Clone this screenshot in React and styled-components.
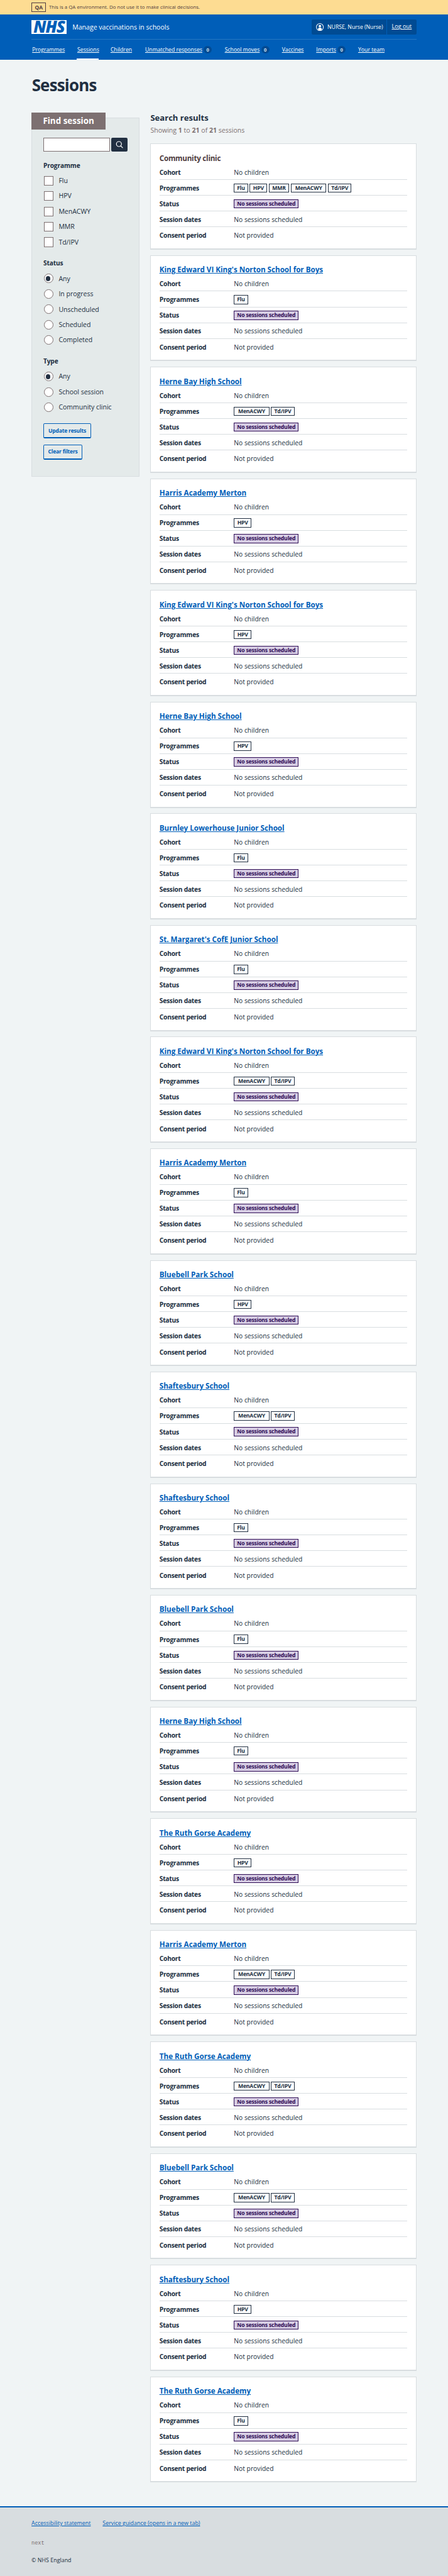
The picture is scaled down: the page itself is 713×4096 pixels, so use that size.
import React from "react";
import styled, { createGlobalStyle } from "styled-components";

const SCALE = 0.55675;
const px = (n) => `${+(n * SCALE).toFixed(3)}px`;

const color = {
  blue: "#005eb8",
  blueDark: "#004b93",
  ink: "#212f41",
  brown: "#4f3d40",
  taupe: "#7d7071",
  line: "#d8dde0",
  page: "#f0f4f5",
};

const GlobalStyle = createGlobalStyle`
  *, *::before, *::after { box-sizing: border-box; }
  body {
    margin: 0;
    background: ${color.page};
    color: ${color.ink};
    font-family: "Open Sans", "Noto Sans", sans-serif;
    font-size: ${px(18.5)};
    line-height: 1.2;
    white-space: nowrap;
  }
  h1, h2, h3, p, dl, dt, dd { margin: 0; padding: 0; font-weight: 700; }
`;

const Container = styled.div`
  margin: 0 ${px(90)};
  width: ${px(1100)};
`;

const Banner = styled.div`
  height: ${px(42)};
  background: #fddc92;
  color: ${color.brown};
`;
const BannerInner = styled(Container)`
  display: flex;
  align-items: center;
  height: 100%;
  gap: ${px(8)};
  font-size: ${px(14.22)};
`;
const EnvTag = styled.strong`
  display: flex;
  align-items: center;
  justify-content: center;
  width: ${px(42)};
  height: ${px(26)};
  border: 1px solid ${color.brown};
  font-size: ${px(15.2)};
  font-weight: 700;
`;

const Header = styled.header`
  height: ${px(128)};
  background: ${color.blue};
  color: #fff;
`;
const HeaderTop = styled(Container)`
  display: flex;
  align-items: center;
  height: ${px(72)};
  border-bottom: 1px solid #2577c3;
`;
const Logo = styled.div`
  display: flex;
  align-items: center;
  justify-content: center;
  width: ${px(100)};
  height: ${px(40)};
  background: #fff;
  color: ${color.blue};
  font-size: ${px(46)};
  font-weight: 800;
  font-style: italic;
  letter-spacing: -0.04em;
  line-height: 0.85;
`;
const ServiceName = styled.span`
  margin-left: ${px(17)};
  font-size: ${px(19)};
`;
const Account = styled.div`
  display: flex;
  align-items: stretch;
  width: ${px(300)};
  height: ${px(42)};
  margin-left: auto;
  border-radius: ${px(4)};
  background: ${color.blueDark};
  font-size: ${px(15.6)};
`;
const AccountUser = styled.div`
  display: flex;
  align-items: center;
  width: ${px(217)};
  padding-left: ${px(14)};
  gap: ${px(10)};
  border-right: 1px solid ${color.blue};
`;
const LogOut = styled.a`
  display: flex;
  flex: 1;
  align-items: center;
  justify-content: center;
  font-size: ${px(16.4)};
  text-decoration: underline;
`;

const Nav = styled(Container)`
  display: flex;
  height: ${px(56)};
  font-size: ${px(15.6)};
`;
const NavItem = styled.a`
  display: flex;
  align-items: center;
  width: ${(p) => px(p.$width)};
  margin-right: ${px(32)};
  padding: ${px(4)} ${px(2)} 0;
  gap: ${px(4)};
  border-bottom: ${px(4)} solid ${(p) => (p.$current ? "#fff" : "transparent")};
`;
const NavText = styled.span`
  text-decoration: underline;
`;
const Count = styled.span`
  display: flex;
  flex: none;
  align-items: center;
  justify-content: center;
  width: ${px(23.5)};
  height: ${px(22)};
  border-radius: 50%;
  background: ${color.blueDark};
  font-size: ${px(13.5)};
  font-weight: 600;
`;

const Main = styled(Container)`
  height: ${px(6987)};
`;
const PageTitle = styled.h1`
  height: ${px(151)};
  padding: ${px(46)} 0 0 ${px(1)};
  font-size: ${px(46.5)};
  letter-spacing: -0.03em;
`;
const Columns = styled.div`
  display: flex;
  align-items: flex-start;
  gap: ${px(32)};
`;

const Filters = styled.aside`
  width: ${px(308)};
  height: ${px(1026)};
  margin-top: ${px(15)};
  padding: 0 ${px(32)};
  border: 1px solid ${color.line};
  background: #e4eaea;
`;
const FiltersTitle = styled.h2`
  display: flex;
  align-items: center;
  justify-content: center;
  width: ${px(212)};
  height: ${px(48)};
  margin: -${px(16)} 0 0 calc(-${px(32)} - 1px);
  padding-bottom: ${px(2)};
  background: ${color.taupe};
  color: #fff;
  font-size: ${px(24.1)};
`;
const SearchBar = styled.div`
  display: flex;
  gap: ${px(4)};
  margin-top: ${px(24)};
`;
const SearchInput = styled.input`
  width: ${px(190)};
  height: ${px(40)};
  padding: 0;
  border: 1px solid ${color.taupe};
  border-radius: 0;
  background: #fff;
`;
const SearchButton = styled.button`
  display: flex;
  align-items: center;
  justify-content: center;
  width: ${px(48)};
  height: ${px(40)};
  padding: 0 0 ${px(2)};
  border: 0;
  border-radius: ${px(4)};
  background: ${color.ink};
`;
const Group = styled.div`
  padding-top: ${px(19)};
`;
const GroupTitle = styled.h3`
  display: flex;
  align-items: center;
  height: ${px(38)};
  margin-bottom: ${px(3)};
  font-size: ${px(18.2)};
  letter-spacing: -0.01em;
`;
const Option = styled.div`
  display: flex;
  align-items: center;
  height: ${px(44)};
  padding-left: ${px(2)};
  gap: ${px(15)};
  font-size: ${px(18.9)};
`;
const Box = styled.span`
  display: flex;
  align-items: center;
  justify-content: center;
  width: ${px(27)};
  height: ${px(27)};
  border: 1px solid ${color.taupe};
  border-radius: ${(p) => (p.$round ? "50%" : "0")};
  background: #fff;
`;
const Dot = styled.span`
  width: ${px(14)};
  height: ${px(14)};
  margin-right: ${px(4)};
  border-radius: 50%;
  background: ${color.ink};
`;
const Button = styled.button`
  display: flex;
  align-items: center;
  justify-content: center;
  width: ${(p) => px(p.$width)};
  height: ${px(43.5)};
  margin-top: ${(p) => px(p.$top)};
  padding: 0;
  border: 1px solid ${color.blue};
  border-bottom-width: 2px;
  border-radius: ${px(4)};
  background: transparent;
  color: ${color.blue};
  font: 700 ${px(15.4)} "Open Sans", sans-serif;
  letter-spacing: -0.025em;
`;

const Results = styled.section`
  width: ${px(760)};
`;
const ResultsTitle = styled.h2`
  height: ${px(38)};
  padding-top: ${px(2)};
  font-size: ${px(23.5)};
`;
const ResultsCount = styled.p`
  height: ${px(51)};
  padding-top: ${px(3)};
  color: ${color.taupe};
  font-size: ${px(19)};
  font-weight: 400;
  & b { font-weight: 700; }
`;
const Card = styled.article`
  height: ${px(302.9)};
  margin-bottom: ${px(16)};
  padding: ${px(23.5)} ${px(24)} 0;
  border: 1px solid ${color.line};
  border-bottom-width: 2px;
  background: #fff;
`;
const CardTitle = styled.h3`
  display: flex;
  align-items: center;
  height: ${px(33.4)};
  color: ${(p) => (p.$link ? color.blue : color.brown)};
  font-size: ${px(21)};
  letter-spacing: ${(p) => (p.$link ? "-0.002em" : "-0.023em")};
  text-decoration: ${(p) => (p.$link ? "underline" : "none")};
  text-decoration-thickness: 1px;
`;
const Row = styled.div`
  display: flex;
  align-items: center;
  height: ${px(45)};
  padding-top: ${px(3)};
  border-bottom: ${(p) => (p.$last ? "0" : `1px solid ${color.line}`)};
`;
const Key = styled.dt`
  width: ${px(213)};
  letter-spacing: -0.025em;
`;
const Value = styled.dd`
  display: flex;
  gap: ${px(5)};
  font-weight: 400;
`;
const Tag = styled.strong`
  display: flex;
  align-items: center;
  justify-content: center;
  width: ${(p) => px(p.$width)};
  height: ${px(26)};
  border: 1px solid ${(p) => (p.$purple ? "#2d0a54" : color.ink)};
  background: ${(p) => (p.$purple ? "#d6cce3" : "#fff")};
  color: ${(p) => (p.$purple ? "#2d0a54" : color.ink)};
  font-size: ${px(15.6)};
  font-weight: 700;
  letter-spacing: -0.022em;
`;

const Footer = styled.footer`
  height: ${px(200)};
  border-top: ${px(4)} solid ${color.blue};
  background: ${color.line};
  font-size: ${px(16)};
`;
const FooterLinks = styled(Container)`
  display: flex;
  align-items: center;
  gap: ${px(34)};
  height: ${px(94)};
  color: ${color.blue};
  text-decoration: underline;
`;
const Release = styled(Container)`
  height: ${px(49)};
  color: ${color.taupe};
  font-family: "Liberation Mono", monospace;
  font-size: ${px(15.4)};
`;
const Copyright = styled(Container)``;

const TAG_WIDTH = { Flu: 40, HPV: 50, MMR: 58, MenACWY: 101, "Td/IPV": 67 };

const NAV = [
  { label: "Programmes", width: 97 },
  { label: "Sessions", width: 63, current: true },
  { label: "Children", width: 67 },
  { label: "Unmatched responses", width: 195.5, count: 0 },
  { label: "School moves", width: 131.5, count: 0 },
  { label: "Vaccines", width: 66 },
  { label: "Imports", width: 88, count: 0 },
  { label: "Your team", width: 81 },
];

const KING = "King Edward VI King's Norton School for Boys";
const HERNE = "Herne Bay High School";
const HARRIS = "Harris Academy Merton";
const BLUEBELL = "Bluebell Park School";
const SHAFTESBURY = "Shaftesbury School";
const RUTH = "The Ruth Gorse Academy";

const SESSIONS = [
  ["Community clinic", ["Flu", "HPV", "MMR", "MenACWY", "Td/IPV"]],
  [KING, ["Flu"]],
  [HERNE, ["MenACWY", "Td/IPV"]],
  [HARRIS, ["HPV"]],
  [KING, ["HPV"]],
  [HERNE, ["HPV"]],
  ["Burnley Lowerhouse Junior School", ["Flu"]],
  ["St. Margaret's CofE Junior School", ["Flu"]],
  [KING, ["MenACWY", "Td/IPV"]],
  [HARRIS, ["Flu"]],
  [BLUEBELL, ["HPV"]],
  [SHAFTESBURY, ["MenACWY", "Td/IPV"]],
  [SHAFTESBURY, ["Flu"]],
  [BLUEBELL, ["Flu"]],
  [HERNE, ["Flu"]],
  [RUTH, ["HPV"]],
  [HARRIS, ["MenACWY", "Td/IPV"]],
  [RUTH, ["MenACWY", "Td/IPV"]],
  [BLUEBELL, ["MenACWY", "Td/IPV"]],
  [SHAFTESBURY, ["HPV"]],
  [RUTH, ["Flu"]],
];

const UserIcon = () => (
  <svg width={px(22)} height={px(22)} viewBox="0 0 22 22">
    <circle cx="11" cy="11" r="10" fill="none" stroke="#fff" strokeWidth="1.8" />
    <circle cx="11" cy="8.3" r="3.6" fill="#fff" />
    <path d="M6 19v-3.2C6 13.6 7.5 12.6 9 12.6h4c1.5 0 3 1 3 3.200V19l-5 2z" fill="#fff" />
  </svg>
);

const SearchIcon = () => (
  <svg
    width={px(22)}
    height={px(22)}
    viewBox="0 0 22 22"
    fill="none"
    stroke="#fff"
    strokeWidth="2.2"
    strokeLinecap="round"
  >
    <circle cx="9.5" cy="9" r="7.2" />
    <path d="M14.5 14.5l5.500 5" />
  </svg>
);

function RadioOption({ label, checked }) {
  return (
    <Option>
      <Box $round>{checked && <Dot />}</Box>
      {label}
    </Option>
  );
}

function SessionCard({ name, programmes, link }) {
  return (
    <Card>
      <CardTitle $link={link}>{name}</CardTitle>
      <dl>
        <Row>
          <Key>Cohort</Key>
          <Value>No children</Value>
        </Row>
        <Row>
          <Key>Programmes</Key>
          <Value>
            {programmes.map((p) => (
              <Tag key={p} $width={TAG_WIDTH[p]}>{p}</Tag>
            ))}
          </Value>
        </Row>
        <Row>
          <Key>Status</Key>
          <Value>
            <Tag $purple $width={185}>No sessions scheduled</Tag>
          </Value>
        </Row>
        <Row>
          <Key>Session dates</Key>
          <Value>No sessions scheduled</Value>
        </Row>
        <Row $last>
          <Key>Consent period</Key>
          <Value>Not provided</Value>
        </Row>
      </dl>
    </Card>
  );
}

export default function App() {
  return (
    <>
      <GlobalStyle />
      <Banner>
        <BannerInner>
          <EnvTag>QA</EnvTag>
          <span>This is a QA environment. Do not use it to make clinical decisions.</span>
        </BannerInner>
      </Banner>
      <Header>
        <HeaderTop>
          <Logo>NHS</Logo>
          <ServiceName>Manage vaccinations in schools</ServiceName>
          <Account>
            <AccountUser>
              <UserIcon />
              <span>NURSE, Nurse (Nurse)</span>
            </AccountUser>
            <LogOut>Log out</LogOut>
          </Account>
        </HeaderTop>
        <Nav>
          {NAV.map((n) => (
            <NavItem key={n.label} $width={n.width} $current={n.current}>
              <NavText>{n.label}</NavText>
              {n.count !== undefined && <Count>{n.count}</Count>}
            </NavItem>
          ))}
        </Nav>
      </Header>
      <Main>
        <PageTitle>Sessions</PageTitle>
        <Columns>
          <Filters>
            <FiltersTitle>Find session</FiltersTitle>
            <SearchBar>
              <SearchInput />
              <SearchButton>
                <SearchIcon />
              </SearchButton>
            </SearchBar>
            <Group>
              <GroupTitle>Programme</GroupTitle>
              {["Flu", "HPV", "MenACWY", "MMR", "Td/IPV"].map((o) => (
                <Option key={o}>
                  <Box />
                  {o}
                </Option>
              ))}
            </Group>
            <Group>
              <GroupTitle>Status</GroupTitle>
              <RadioOption label="Any" checked />
              {["In progress", "Unscheduled", "Scheduled", "Completed"].map((o) => (
                <RadioOption key={o} label={o} />
              ))}
            </Group>
            <Group>
              <GroupTitle>Type</GroupTitle>
              <RadioOption label="Any" checked />
              <RadioOption label="School session" />
              <RadioOption label="Community clinic" />
            </Group>
            <Button $width={137} $top={24}>Update results</Button>
            <Button $width={112} $top={16.5}>Clear filters</Button>
          </Filters>
          <Results>
            <ResultsTitle>Search results</ResultsTitle>
            <ResultsCount>
              Showing <b>1</b> to <b>21</b> of <b>21</b> sessions
            </ResultsCount>
            {SESSIONS.map(([name, programmes], i) => (
              <SessionCard key={i} name={name} programmes={programmes} link={i > 0} />
            ))}
          </Results>
        </Columns>
      </Main>
      <Footer>
        <FooterLinks>
          <span>Accessibility statement</span>
          <span>Service guidance (opens in a new tab)</span>
        </FooterLinks>
        <Release>next</Release>
        <Copyright>© NHS England</Copyright>
      </Footer>
    </>
  );
}
